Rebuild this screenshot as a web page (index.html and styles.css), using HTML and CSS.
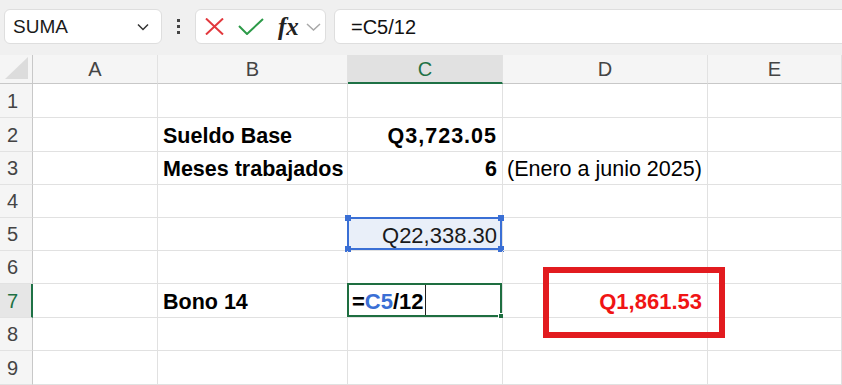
FILE: index.html
```html
<!DOCTYPE html>
<html lang="es">
<head>
  <meta charset="UTF-8">
  <title>Bono 14</title>
  <link rel="stylesheet" href="styles.css">
</head>
<body>

  <div class="toolbar">
    <div class="namebox">
      <span>SUMA</span>
      <svg class="chev" width="12" height="8" viewBox="0 0 12 8"><path d="M1 1.5 L6 6.5 L11 1.5" fill="none" stroke="#333" stroke-width="1.5"/></svg>
    </div>
    <div class="dots"><i></i><i></i><i></i></div>
    <div class="fbtns">
      <svg width="19" height="17" viewBox="0 0 19 17"><path d="M1 0.5 L18 16.5 M18 0.5 L1 16.5" stroke="#e2383d" stroke-width="2" fill="none"/></svg>
      <svg width="26" height="17" viewBox="0 0 26 17"><path d="M1 8 L9 16 L25 1" stroke="#2c9a48" stroke-width="2" fill="none"/></svg>
      <span class="fx">fx</span>
      <svg width="15" height="8" viewBox="0 0 15 8"><path d="M1 1 L7.5 7 L14 1" fill="none" stroke="#a8a8a8" stroke-width="1.5"/></svg>
    </div>
    <div class="finput">=C5/12</div>
  </div>

  <div class="sheet">
    <!-- encabezados -->
    <div class="hd corner"><svg width="24" height="23" viewBox="0 0 24 23"><polygon points="23,0 23,22 0,22" fill="#dcdcdc"/></svg></div>
    <div class="hd col">A</div>
    <div class="hd col">B</div>
    <div class="hd col on">C</div>
    <div class="hd col">D</div>
    <div class="hd col">E</div>

    <div class="hd row">1</div><div class="c"></div><div class="c"></div><div class="c"></div><div class="c"></div><div class="c"></div>

    <div class="hd row">2</div><div class="c"></div>
    <div class="c b">Sueldo Base</div>
    <div class="c b r wide">Q3,723.05</div>
    <div class="c"></div><div class="c"></div>

    <div class="hd row">3</div><div class="c"></div>
    <div class="c b">Meses trabajados</div>
    <div class="c b r">6</div>
    <div class="c note">(Enero a junio 2025)</div>
    <div class="c"></div>

    <div class="hd row">4</div><div class="c"></div><div class="c"></div><div class="c"></div><div class="c"></div><div class="c"></div>

    <div class="hd row">5</div><div class="c"></div><div class="c"></div>
    <div class="c r arial ref">
      Q22,338.30
      <div class="range"><i class="h tl"></i><i class="h tr"></i><i class="h bl"></i><i class="h br"></i></div>
    </div>
    <div class="c"></div><div class="c"></div>

    <div class="hd row">6</div><div class="c"></div><div class="c"></div><div class="c"></div><div class="c"></div><div class="c"></div>

    <div class="hd row on">7</div><div class="c"></div>
    <div class="c b">Bono 14</div>
    <div class="c b active">=<span class="blue">C5</span>/12<span class="caret"></span>
      <div class="cursor"><i class="fill"></i></div>
    </div>
    <div class="c r result">Q1,861.53</div>
    <div class="c"></div>

    <div class="hd row">8</div><div class="c"></div><div class="c"></div><div class="c"></div><div class="c"></div><div class="c"></div>

    <div class="hd row">9</div><div class="c"></div><div class="c"></div><div class="c"></div><div class="c"></div><div class="c"></div>

    <div class="callout"></div>
  </div>

</body>
</html>
```

FILE: styles.css
```css
* {
  box-sizing: border-box;
}

body {
  margin: 0;
  background: #ffffff;
  font-family: 'Liberation Sans', Arial, sans-serif;
  color: #000;
  overflow: hidden;
}

/* barra de formulas */
.toolbar {
  height: 55px;
  background: #f0f0f0;
  display: flex;
  align-items: flex-start;
  padding: 9px 0 0 4px;
}

.namebox {
  width: 158px;
  height: 35px;
  background: #fff;
  border: 1px solid #dedede;
  border-radius: 6px;
  display: flex;
  align-items: center;
  justify-content: space-between;
  padding: 1px 12px 0 8px;
  font-size: 19px;
  color: #1a1a1a;
}

.dots {
  width: 33px;
  height: 35px;
  display: flex;
  flex-direction: column;
  align-items: center;
  justify-content: center;
  gap: 3px;
}

.dots i {
  width: 3px;
  height: 3px;
  background: #444;
}

.fbtns {
  width: 131px;
  height: 35px;
  background: #fff;
  border: 1px solid #dedede;
  border-radius: 6px;
  display: flex;
  align-items: center;
  padding-left: 9px;
}

.fbtns svg:nth-child(2) {
  margin-left: 14px;
}

.fx {
  font-family: 'Liberation Serif', serif;
  font-style: italic;
  font-weight: bold;
  font-size: 25px;
  margin-left: 14px;
  line-height: 1;
  color: #222;
}

.fbtns svg:last-child {
  margin-left: 7px;
}

.finput {
  flex: 1;
  margin-left: 8px;
  margin-right: -10px;
  height: 35px;
  background: #fff;
  border: 1px solid #dedede;
  border-radius: 6px;
  display: flex;
  align-items: center;
  padding: 1px 0 0 16px;
  font-size: 20px;
  color: #111;
}

/* hoja */
.sheet {
  position: relative;
  display: grid;
  grid-template-columns: 33px 125px 190px 155px 205px 1fr;
  grid-template-rows: 29px 34px 34px 33px 33px 33px 33px 34px 33px 34px;
}

.hd {
  background: #f5f5f5;
  color: #444;
  font-size: 20px;
  display: flex;
  align-items: center;
  padding-top: 1px;
}

.corner {
  border-right: 1px solid #c8c8c8;
  border-bottom: 1px solid #c8c8c8;
  justify-content: flex-end;
  align-items: flex-end;
  padding: 0 3px 3px 0;
}

.col {
  justify-content: center;
  border-right: 1px solid #e2e2e2;
  border-bottom: 1px solid #c8c8c8;
}

.col.on {
  background: #e1e1e1;
  color: #1e7145;
  border-bottom: 2px solid #1e7145;
}

.row {
  padding-left: 7px;
  border-right: 1px solid #c8c8c8;
  border-bottom: 1px solid #e2e2e2;
}

.row.on {
  background: #e6e6e6;
  color: #1e7145;
  border-right: 2px solid #1e7145;
}

.c {
  border-right: 1px solid #e1e1e1;
  border-bottom: 1px solid #e1e1e1;
  font-size: 21.5px;
  display: flex;
  align-items: center;
  padding: 3px 5px 0;
  white-space: nowrap;
  position: relative;
}

.b {
  font-weight: bold;
}

.r {
  justify-content: flex-end;
}

.wide {
  letter-spacing: 1px;
}

.note {
  padding-left: 4px;
}

.arial {
  font-size: 22px;
  color: #1a1a1a;
}

.ref {
  background: #e9eff9;
}

.range {
  position: absolute;
  left: -1px;
  top: -1px;
  right: 0;
  bottom: 0;
  border: 2px solid #3a6fd5;
}

.h {
  position: absolute;
  width: 6px;
  height: 6px;
  background: #3a6fd5;
}

.tl { left: -4px; top: -4px; }
.tr { right: -4px; top: -4px; }
.bl { left: -4px; bottom: -4px; }
.br { right: -4px; bottom: -4px; }

.active {
  font-size: 22px;
  padding-left: 4px;
}

.blue {
  color: #3a6fd5;
}

.caret {
  display: inline-block;
  width: 1px;
  height: 31px;
  background: #222;
  margin: -3px 0 0 1px;
}

.cursor {
  position: absolute;
  left: -1px;
  top: -1px;
  right: 0;
  bottom: 0;
  border: 2px solid #1e6e40;
}

.fill {
  position: absolute;
  right: -4px;
  bottom: -4px;
  width: 6px;
  height: 6px;
  background: #1e6e40;
  border: 1px solid #fff;
}

.result {
  color: #f01414;
  font-weight: bold;
  font-size: 22px;
}

.callout {
  position: absolute;
  left: 543px;
  top: 212px;
  width: 182px;
  height: 71px;
  border: 6px solid #e21b1f;
}
```
